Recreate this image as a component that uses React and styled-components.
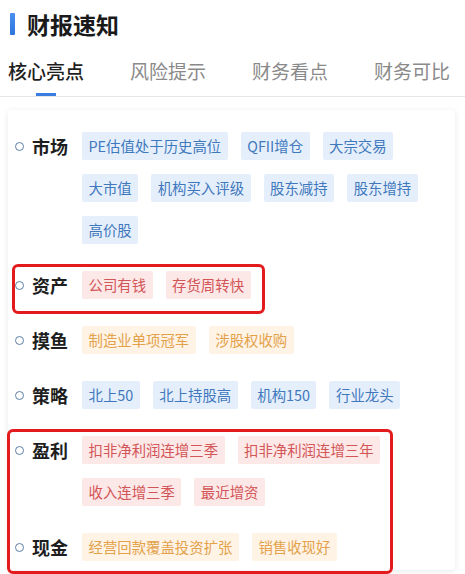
import React from "react";
import styled, { createGlobalStyle } from "styled-components";

const Global = createGlobalStyle`
  html, body { margin: 0; padding: 0; background: #ffffff; }
  body { font-family: "Noto Sans CJK SC", "Noto Sans", sans-serif; }
  * { box-sizing: border-box; }
`;

const Page = styled.div`
  width: 465px;
  height: 574px;
  overflow: hidden;
  background: #fff;
`;

const TitleRow = styled.div`
  height: 48px;
  display: flex;
  align-items: center;
  padding-left: 10px;
  gap: 12px;
`;

const TitleBar = styled.span`
  width: 5px;
  height: 22px;
  border-radius: 1px;
  background: linear-gradient(180deg, #4a8ff0, #2f74dc);
`;

const Title = styled.h1`
  margin: 0;
  font-size: 23px;
  line-height: 28px;
  font-weight: 600;
  color: #1a1a1a;
`;

const TabBar = styled.div`
  height: 49px;
  display: flex;
  gap: 46px;
  padding-left: 8px;
  border-bottom: 1px solid #e6e6e6;
`;

const Tab = styled.div`
  position: relative;
  font-size: 19px;
  line-height: 46px;
  color: ${(p) => (p.$active ? "#1f1f1f" : "#8a8a8a")};
  font-weight: ${(p) => (p.$active ? 500 : 400)};
  white-space: nowrap;
  &::after {
    content: "";
    display: ${(p) => (p.$active ? "block" : "none")};
    position: absolute;
    left: 50%;
    bottom: 0;
    width: 20px;
    height: 3px;
    margin-left: -10px;
    background: #3a7de0;
  }
`;

const Card = styled.div`
  margin: 13px 10px 0 8px;
  height: 460px;
  background: #fff;
  border-radius: 4px;
  box-shadow: 0 1px 6px rgba(0, 0, 0, 0.09);
  padding: 22px 0 12px;
  display: flex;
  flex-direction: column;
  gap: 27px;
`;

const Group = styled.div`
  position: relative;
  display: flex;
  flex-direction: column;
  gap: 27px;
  &::after {
    content: "";
    position: absolute;
    left: ${(p) => p.$box.left}px;
    top: ${(p) => p.$box.top}px;
    width: ${(p) => p.$box.width}px;
    height: ${(p) => p.$box.height}px;
    border: 3px solid #e31b1d;
    border-radius: 6px;
    pointer-events: none;
  }
`;

const Row = styled.div`
  display: flex;
  align-items: flex-start;
`;

const LabelCol = styled.div`
  flex: 0 0 74px;
  height: 28px;
  display: flex;
  align-items: center;
  gap: 8px;
  padding-left: 7px;
`;

const Dot = styled.span`
  width: 9px;
  height: 9px;
  border-radius: 50%;
  border: 1.5px solid #5d7ea6;
  background: #fff;
`;

const Label = styled.span`
  font-size: 18px;
  font-weight: 700;
  color: #1e1e1e;
  line-height: 28px;
`;

const Tags = styled.div`
  flex: 1;
  display: flex;
  flex-wrap: wrap;
  gap: 14px 13px;
`;

const palette = {
  blue: { bg: "#e5effb", fg: "#3f78bd" },
  red: { bg: "#fde8e8", fg: "#d25557" },
  orange: { bg: "#fff3e6", fg: "#e3a24a" },
};

const Tag = styled.span`
  height: 28px;
  line-height: 28px;
  padding: 0 6.5px;
  font-size: 14.4px;
  border-radius: 2px;
  white-space: nowrap;
  background: ${(p) => palette[p.$tone].bg};
  color: ${(p) => palette[p.$tone].fg};
`;

const Section = ({ label, tone, tags }) => (
  <Row>
    <LabelCol>
      <Dot />
      <Label>{label}</Label>
    </LabelCol>
    <Tags>
      {tags.map((t) => (
        <Tag key={t} $tone={tone}>
          {t}
        </Tag>
      ))}
    </Tags>
  </Row>
);

export default function App() {
  return (
    <Page>
      <Global />
      <TitleRow>
        <TitleBar />
        <Title>财报速知</Title>
      </TitleRow>
      <TabBar>
        <Tab $active>核心亮点</Tab>
        <Tab>风险提示</Tab>
        <Tab>财务看点</Tab>
        <Tab>财务可比</Tab>
      </TabBar>
      <Card>
        <Section
          label="市场"
          tone="blue"
          tags={[
            "PE估值处于历史高位",
            "QFII增仓",
            "大宗交易",
            "大市值",
            "机构买入评级",
            "股东减持",
            "股东增持",
            "高价股",
          ]}
        />
        <Group $box={{ left: 4, top: -7, width: 247, height: 44 }}>
          <Section label="资产" tone="red" tags={["公司有钱", "存货周转快"]} />
        </Group>
        <Section label="摸鱼" tone="orange" tags={["制造业单项冠军", "涉股权收购"]} />
        <Section label="策略" tone="blue" tags={["北上50", "北上持股高", "机构150", "行业龙头"]} />
        <Group $box={{ left: -1, top: -7, width: 380, height: 139 }}>
          <Section
            label="盈利"
            tone="red"
            tags={["扣非净利润连增三季", "扣非净利润连增三年", "收入连增三季", "最近增资"]}
          />
          <Section label="现金" tone="orange" tags={["经营回款覆盖投资扩张", "销售收现好"]} />
        </Group>
      </Card>
    </Page>
  );
}
